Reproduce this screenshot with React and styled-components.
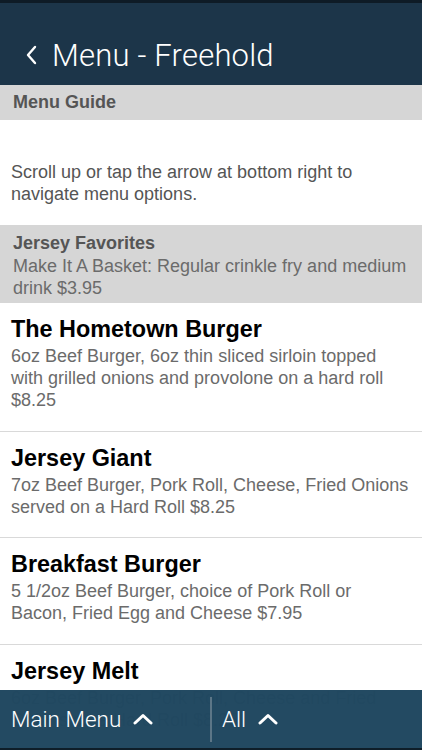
import React from 'react';
import styled, { createGlobalStyle } from 'styled-components';

const GlobalStyle = createGlobalStyle`
  html, body {
    margin: 0;
    padding: 0;
    background: #fff;
    font-family: "Liberation Sans", Arial, sans-serif;
  }
`;

const Page = styled.div`
  width: 422px;
  height: 750px;
  overflow: hidden;
  position: relative;
  background: #fff;
`;

const Header = styled.header`
  height: 85px;
  border-top: 3px solid #0e1b26;
  background: #1c3549;
  display: flex;
  align-items: center;
  padding: 22px 0 0 25px;
  box-sizing: border-box;
  color: #fff;
`;

const BackIcon = styled.svg`
  width: 14px;
  height: 22px;
  margin-right: 13px;
`;

const Title = styled.h1`
  margin: 0;
  font-family: Roboto, "Liberation Sans", sans-serif;
  font-weight: 300;
  font-size: 31px;
  letter-spacing: 0.2px;
`;

const SectionBar = styled.div`
  background: #d6d6d6;
  padding: ${({ $tall }) => ($tall ? '8px 12px 4px 13px' : '7px 13px 8px')};
  color: #555;
`;

const SectionTitle = styled.div`
  font-weight: bold;
  font-size: 18px;
  line-height: 20px;
`;

const SectionNote = styled.div`
  font-size: 18px;
  line-height: 22px;
  color: #6b6b6b;
  margin-top: 2px;
`;

const Intro = styled.p`
  margin: 0;
  padding: 41px 11px 20px;
  font-size: 18px;
  line-height: 22px;
  color: #555;
`;

const Item = styled.div`
  padding: 12px 11px 0;
  height: ${({ $h }) => $h}px;
  box-sizing: border-box;
  border-bottom: 1px solid #d9d9d9;
`;

const ItemName = styled.div`
  font-weight: bold;
  font-size: 23.4px;
  line-height: 28px;
  color: #000;
`;

const ItemDesc = styled.div`
  font-size: 18px;
  line-height: 22px;
  color: #6b6b6b;
  margin-top: 2px;
`;

const BottomBar = styled.nav`
  position: absolute;
  left: 0;
  right: 0;
  bottom: 0;
  height: 60px;
  background: rgba(32, 71, 95, 0.985);
  border-bottom: 2px solid #0e1e29;
  box-sizing: border-box;
  display: flex;
  align-items: center;
  color: #fff;
`;

const BarButton = styled.div`
  flex: ${({ $grow }) => ($grow ? 1 : '0 0 210px')};
  display: flex;
  align-items: center;
  height: 45px;
  padding-left: ${({ $pad }) => $pad}px;
  box-sizing: border-box;
  font-size: 22.5px;
  font-family: Roboto, "Liberation Sans", sans-serif;
  font-weight: 300;
  border-left: ${({ $divider }) => ($divider ? '2px solid #5c7687' : 'none')};
  gap: 12px;
`;

const Chevron = () => (
  <svg width="20" height="12" viewBox="0 0 20 12">
    <path d="M2 10 L10 2.5 L18 10" fill="none" stroke="#fff" strokeWidth="3" strokeLinecap="round" strokeLinejoin="round" />
  </svg>
);

const items = [
  {
    name: 'The Hometown Burger',
    desc: '6oz Beef Burger, 6oz thin sliced sirloin topped with grilled onions and provolone on a hard roll $8.25',
    h: 129,
  },
  {
    name: 'Jersey Giant',
    desc: '7oz Beef Burger, Pork Roll, Cheese, Fried Onions served on a Hard Roll $8.25',
    h: 106,
  },
  {
    name: 'Breakfast Burger',
    desc: '5 1/2oz Beef Burger, choice of Pork Roll or Bacon, Fried Egg and Cheese $7.95',
    h: 107,
  },
  {
    name: 'Jersey Melt',
    desc: '6oz Beef Burger, Pork Roll, Cheese and Fried Onions on a Hard Roll $8.25',
    h: 106,
  },
];

export default function App() {
  return (
    <Page>
      <GlobalStyle />
      <Header>
        <BackIcon viewBox="0 0 14 22">
          <path d="M10 3 L3 11 L10 19" fill="none" stroke="#fff" strokeWidth="2.4" strokeLinecap="round" strokeLinejoin="round" />
        </BackIcon>
        <Title>Menu - Freehold</Title>
      </Header>

      <SectionBar>
        <SectionTitle>Menu Guide</SectionTitle>
      </SectionBar>
      <Intro>Scroll up or tap the arrow at bottom right to navigate menu options.</Intro>

      <SectionBar $tall>
        <SectionTitle>Jersey Favorites</SectionTitle>
        <SectionNote>Make It A Basket: Regular crinkle fry and medium drink $3.95</SectionNote>
      </SectionBar>

      {items.map((item) => (
        <Item key={item.name} $h={item.h}>
          <ItemName>{item.name}</ItemName>
          <ItemDesc>{item.desc}</ItemDesc>
        </Item>
      ))}

      <BottomBar>
        <BarButton $pad={11}>
          Main Menu <Chevron />
        </BarButton>
        <BarButton $grow $divider $pad={10}>
          All <Chevron />
        </BarButton>
      </BottomBar>
    </Page>
  );
}
